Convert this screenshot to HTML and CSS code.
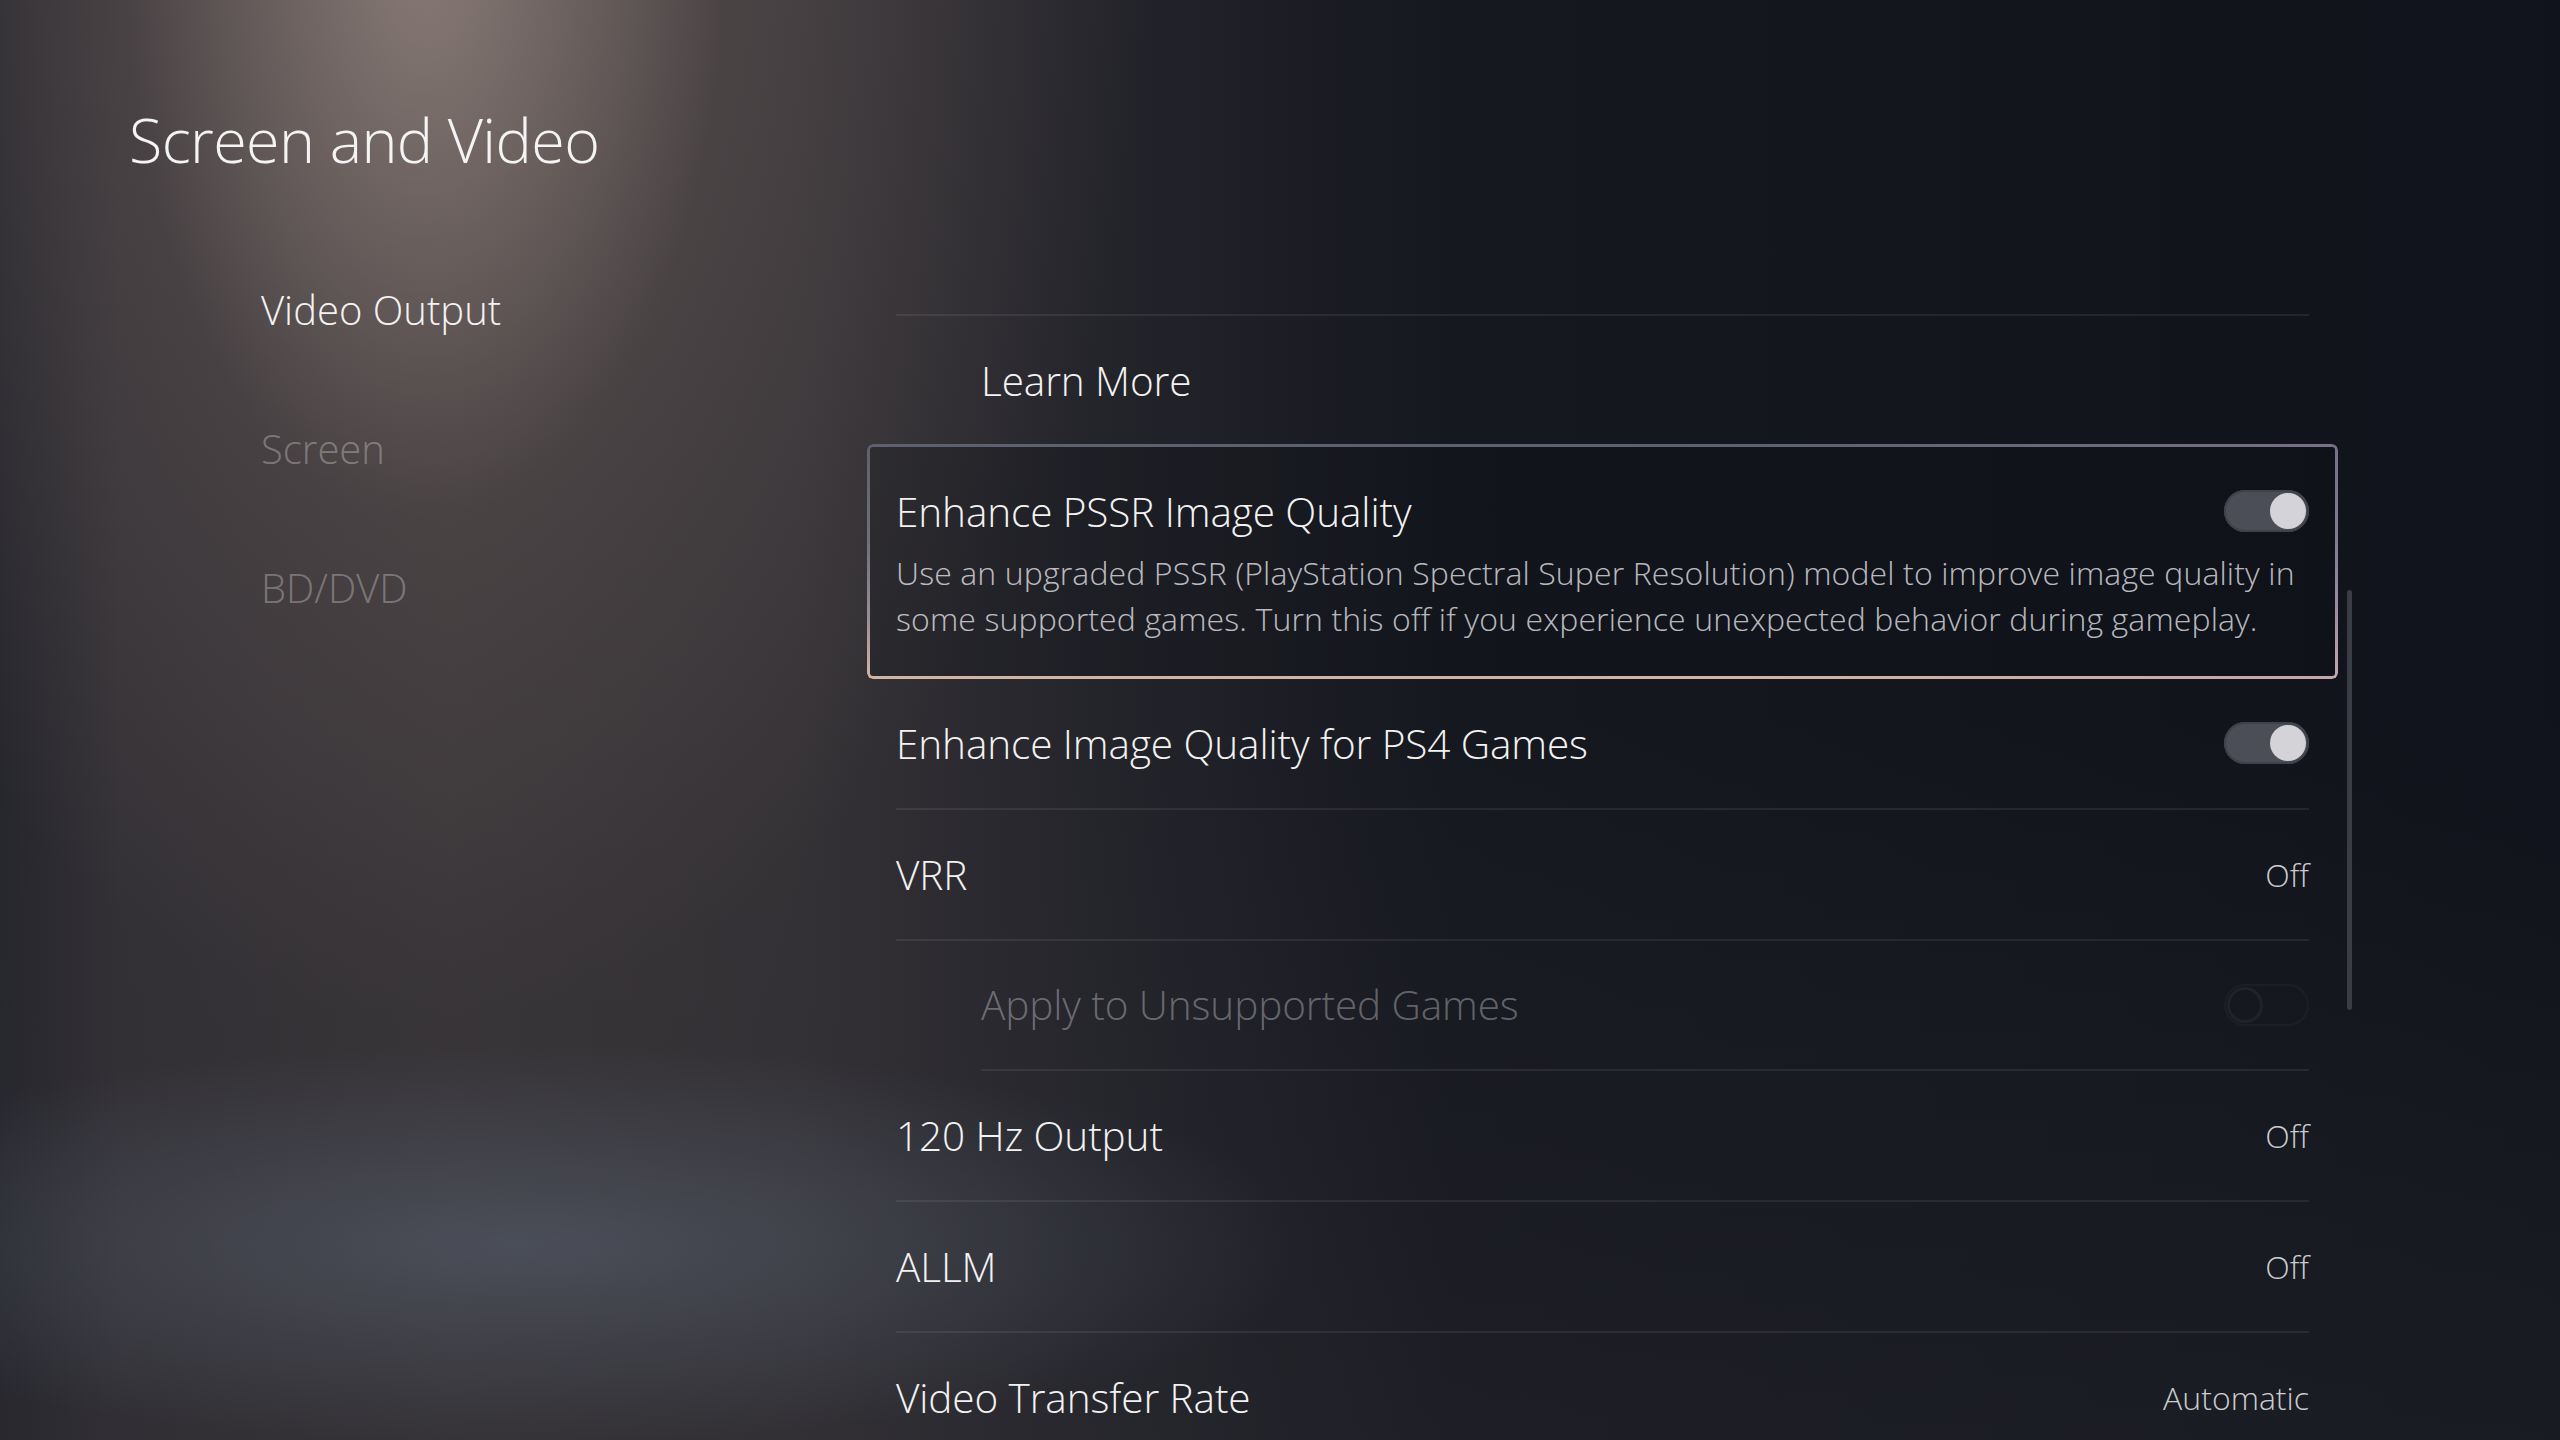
FILE: index.html
```html
<!DOCTYPE html>
<html lang="en">
<head>
<meta charset="utf-8">
<title>Screen and Video</title>
<link rel="stylesheet" href="styles.css">
</head>
<body>
<div class="screen">
  <aside class="side">
    <h1 class="title">Screen and Video</h1>
    <nav class="nav">
      <div class="nav-item active">Video Output</div>
      <div class="nav-item">Screen</div>
      <div class="nav-item">BD/DVD</div>
    </nav>
  </aside>
  <main class="main">
    <div class="list">
      <div class="row row-ghost"></div>
      <div class="row row-sub row-top"><span class="label">Learn More</span></div>
      <div class="card">
        <div class="card-head">
          <span class="label">Enhance PSSR Image Quality</span>
          <span class="toggle on"><span class="knob"></span></span>
        </div>
        <p class="desc">Use an upgraded PSSR (PlayStation Spectral Super Resolution) model to improve image quality in some supported games. Turn this off if you experience unexpected behavior during gameplay.</p>
      </div>
      <div class="row">
        <span class="label">Enhance Image Quality for PS4 Games</span>
        <span class="toggle on"><span class="knob"></span></span>
      </div>
      <div class="row">
        <span class="label">VRR</span>
        <span class="value">Off</span>
      </div>
      <div class="row row-sub row-disabled">
        <span class="label">Apply to Unsupported Games</span>
        <span class="toggle off"><span class="knob"></span></span>
      </div>
      <div class="row">
        <span class="label">120 Hz Output</span>
        <span class="value">Off</span>
      </div>
      <div class="row">
        <span class="label">ALLM</span>
        <span class="value">Off</span>
      </div>
      <div class="row">
        <span class="label">Video Transfer Rate</span>
        <span class="value">Automatic</span>
      </div>
    </div>
    <div class="scrollbar"></div>
  </main>
</div>
</body>
</html>
```
FILE: styles.css
```css
* { box-sizing: border-box; }

html, body {
  margin: 0;
  padding: 0;
  background: #10131b;
}

.screen {
  width: 2560px;
  height: 1440px;
  overflow: hidden;
  display: flex;
  font-family: "Open Sans", "Noto Sans", sans-serif;
  font-weight: 300;
  color: #f2f2f2;
  background:
    radial-gradient(ellipse 300px 560px at 425px -40px, rgba(180, 162, 154, 0.5), rgba(180, 162, 154, 0) 100%),
    radial-gradient(ellipse 720px 1100px at 430px -80px, rgba(130, 114, 108, 0.45), rgba(130, 114, 108, 0) 100%),
    radial-gradient(ellipse 800px 200px at 520px 1245px, rgba(95, 105, 122, 0.5), rgba(95, 105, 122, 0) 100%),
    linear-gradient(180deg, rgba(0, 0, 0, 0) 50%, rgba(44, 44, 50, 0.35) 100%),
    linear-gradient(90deg, #26262d 0, #343136 120px, #3a3639 450px, #353236 800px, #24242b 1100px, #16181f 1450px, #10131b 2560px);
}

.side {
  width: 867px;
  flex: none;
  padding: 100px 0 0 129px;
}

.title {
  margin: 0;
  font-size: 61px;
  font-weight: 300;
  line-height: 80px;
  letter-spacing: -0.6px;
  color: #f4f4f4;
}

.nav {
  margin-top: 60px;
  padding-left: 132px;
}

.nav-item {
  height: 139px;
  line-height: 139px;
  font-size: 40px;
  letter-spacing: 0;
  color: rgba(255, 255, 255, 0.3);
}

.nav-item.active {
  color: #f2f2f2;
}

.main {
  position: relative;
  width: 1471px;
  flex: none;
  padding: 185px 29px 0;
}

.row {
  display: flex;
  align-items: center;
  justify-content: space-between;
  height: 130.75px;
  border-bottom: 2px solid rgba(255, 255, 255, 0.075);
}

.row-ghost {
  height: 131px;
}

.row-top {
  height: 128px;
  border-bottom: none;
}

.row-sub {
  margin-left: 85px;
}

.label {
  font-size: 40.5px;
  letter-spacing: -0.1px;
  color: #f2f2f2;
  white-space: nowrap;
}

.row-disabled .label {
  color: rgba(255, 255, 255, 0.32);
}

.value {
  font-size: 32px;
  letter-spacing: 0;
  color: rgba(255, 255, 255, 0.78);
}

.card {
  position: relative;
  height: 235px;
  margin: 0 -29px;
  padding: 39px 29px 37px;
  border-radius: 6px;
  background: rgba(10, 12, 18, 0.22);
}

.card::before {
  content: "";
  position: absolute;
  inset: 0;
  border-radius: 6px;
  padding: 3px;
  background:
    linear-gradient(90deg, rgba(0, 0, 0, 0) 60%, rgba(170, 140, 190, 0.35) 100%),
    linear-gradient(180deg, #5d616d 0%, #6c6f7c 40%, #9a8f98 75%, #d4b5a2 100%);
  -webkit-mask: linear-gradient(#000 0 0) content-box, linear-gradient(#000 0 0);
  -webkit-mask-composite: xor;
  mask-composite: exclude;
  pointer-events: none;
}

.card-head {
  display: flex;
  align-items: center;
  justify-content: space-between;
  height: 56px;
}

.desc {
  margin: 11px 0 0;
  font-size: 32px;
  line-height: 46px;
  letter-spacing: 0.12px;
  color: rgba(230, 230, 236, 0.8);
}

.toggle {
  display: flex;
  align-items: center;
  width: 85px;
  height: 42px;
  padding: 0 3px;
  border-radius: 21px;
  background: #4b4e57;
  box-shadow: inset 0 0 0 2px #3f424a;
  flex: none;
}

.toggle.on {
  justify-content: flex-end;
}

.toggle.off {
  justify-content: flex-start;
  opacity: 0.06;
  background: transparent;
  box-shadow: inset 0 0 0 2px #8a8c94;
}

.knob {
  width: 36px;
  height: 36px;
  border-radius: 50%;
  background: #d4d4d8;
}

.toggle.off .knob {
  background: transparent;
  box-shadow: inset 0 0 0 3px #c8c8cc;
}

.scrollbar {
  position: absolute;
  left: 1480px;
  top: 590px;
  width: 5px;
  height: 420px;
  border-radius: 3px;
  background: #3a3d45;
}
```
